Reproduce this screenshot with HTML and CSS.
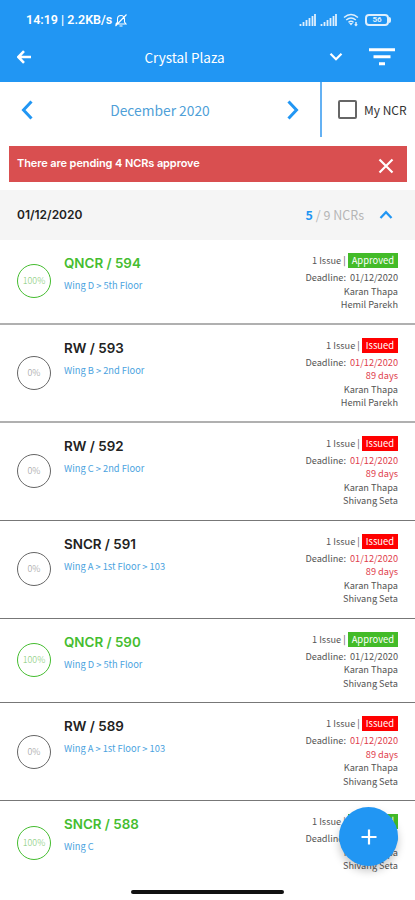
FILE: index.html
```html
<!DOCTYPE html>
<html lang="en">
<head>
<meta charset="utf-8">
<title>Crystal Plaza</title>
<link rel="stylesheet" href="styles.css">
</head>
<body>
<div class="app">
  <header class="header">
    <div class="status">
      <span class="time">14:19 | 2.2KB/s</span>
      <svg class="mute" width="14" height="15" viewBox="0 0 14 15"><path d="M2 11h10l-1.5-2V6a3.5 3.5 0 0 0-7 0v3zM5.500 13h3M1.500 13 12.500 1.500"/></svg>
      <div class="indicators">
        <svg width="17" height="12" viewBox="0 0 17 12"><path class="bars" d="M1.500 12v-2M4.500 12V8M7.500 12V6M10.500 12V4M13.500 12V2M16 12V0"/></svg>
        <svg width="17" height="12" viewBox="0 0 17 12"><path class="bars" d="M1.500 12v-2M4.500 12V8M7.500 12V6M10.500 12V4M13.500 12V2M16 12V0"/></svg>
        <svg class="wifi" width="17" height="14" viewBox="0 0 17 14"><path d="M1 4.500Q8 -1.500 15 4.500M3.200 7Q8 3 12.800 7M5.500 9.300Q8 7.300 10.500 9.300"/><path class="solid" d="m8 12.500-2-2.500h4z"/><path d="M13 9v3.500m-1.200-1.200L13 12.500l1.200-1.200"/></svg>
        <span class="battery">56</span>
      </div>
    </div>
    <div class="toolbar">
      <svg class="back" width="14" height="14" viewBox="0 0 14 14"><path d="M14 7H1.500M7 1.200 1.300 7 7 12.800"/></svg>
      <h1>Crystal Plaza</h1>
      <svg class="down" width="14" height="10" viewBox="0 0 14 10"><path d="m1.500 1.800 5.500 5.500 5.500-5.500"/></svg>
      <svg class="filter" width="26" height="18" viewBox="0 0 26 18"><path d="M0 1.700h26M4.500 8.800h17M10 15.800h6"/></svg>
    </div>
  </header>
  <div class="monthbar">
    <div class="month">
      <svg width="12" height="20" viewBox="0 0 12 20"><path d="M10.500 1.500 2.500 10l8 8.500"/></svg>
      <span>December 2020</span>
      <svg width="12" height="20" viewBox="0 0 12 20"><path d="m1.500 1.500 8 8.500-8 8.500"/></svg>
    </div>
    <label class="mine"><span class="box"></span><span>My NCR</span></label>
  </div>
  <div class="alert">
    <span>There are pending 4 NCRs approve</span>
    <svg width="16" height="16" viewBox="0 0 16 16"><path d="m1.500 1.500 13 13m0-13-13 13"/></svg>
  </div>
  <div class="group">
    <span class="date">01/12/2020</span>
    <span class="count"><b>5</b> / 9 NCRs</span>
    <svg width="14" height="10" viewBox="0 0 14 10"><path d="M1.500 8 7 2.200 12.500 8"/></svg>
  </div>
  <main>
    <article class="row approved">
      <div class="ring">100%</div>
      <div class="info"><h2>QNCR / 594</h2><p>Wing D &gt; 5th Floor</p></div>
      <div class="meta"><div class="issue">1 Issue | <span class="tag">Approved</span></div><div>Deadline: <span class="due">01/12/2020</span></div><div>Karan Thapa</div><div>Hemil Parekh</div></div>
    </article>
    <article class="row">
      <div class="ring">0%</div>
      <div class="info"><h2>RW / 593</h2><p>Wing B &gt; 2nd Floor</p></div>
      <div class="meta"><div class="issue">1 Issue | <span class="tag">Issued</span></div><div>Deadline: <span class="due">01/12/2020</span></div><div class="late">89 days</div><div>Karan Thapa</div><div>Hemil Parekh</div></div>
    </article>
    <article class="row">
      <div class="ring">0%</div>
      <div class="info"><h2>RW / 592</h2><p>Wing C &gt; 2nd Floor</p></div>
      <div class="meta"><div class="issue">1 Issue | <span class="tag">Issued</span></div><div>Deadline: <span class="due">01/12/2020</span></div><div class="late">89 days</div><div>Karan Thapa</div><div>Shivang Seta</div></div>
    </article>
    <article class="row">
      <div class="ring">0%</div>
      <div class="info"><h2>SNCR / 591</h2><p>Wing A &gt; 1st Floor &gt; 103</p></div>
      <div class="meta"><div class="issue">1 Issue | <span class="tag">Issued</span></div><div>Deadline: <span class="due">01/12/2020</span></div><div class="late">89 days</div><div>Karan Thapa</div><div>Shivang Seta</div></div>
    </article>
    <article class="row approved">
      <div class="ring">100%</div>
      <div class="info"><h2>QNCR / 590</h2><p>Wing D &gt; 5th Floor</p></div>
      <div class="meta"><div class="issue">1 Issue | <span class="tag">Approved</span></div><div>Deadline: <span class="due">01/12/2020</span></div><div>Karan Thapa</div><div>Shivang Seta</div></div>
    </article>
    <article class="row">
      <div class="ring">0%</div>
      <div class="info"><h2>RW / 589</h2><p>Wing A &gt; 1st Floor &gt; 103</p></div>
      <div class="meta"><div class="issue">1 Issue | <span class="tag">Issued</span></div><div>Deadline: <span class="due">01/12/2020</span></div><div class="late">89 days</div><div>Karan Thapa</div><div>Shivang Seta</div></div>
    </article>
    <article class="row approved">
      <div class="ring">100%</div>
      <div class="info"><h2>SNCR / 588</h2><p>Wing C</p></div>
      <div class="meta"><div class="issue">1 Issue | <span class="tag">Approved</span></div><div>Deadline: <span class="due">01/12/2020</span></div><div>Karan Thapa</div><div>Shivang Seta</div></div>
    </article>
  </main>
  <button class="fab" aria-label="Add"><svg width="16" height="16" viewBox="0 0 16 16"><path d="M8 .5v15M.5 8h15"/></svg></button>
  <div class="homebar"></div>
</div>
</body>
</html>
```
FILE: styles.css
```css
* { box-sizing: border-box; }
body { margin: 0; background: #fff; }
h1, h2, p { margin: 0; }
svg { display: block; flex: none; fill: none; stroke: currentColor; stroke-width: 2.2; }
.app {
  position: relative;
  width: 415px;
  height: 900px;
  overflow: hidden;
  background: #fff;
  color: #555;
  font-family: "Noto Sans CJK SC", sans-serif;
  white-space: nowrap;
}
.header { height: 82px; background: #2196f3; color: #fff; }
.status { display: flex; align-items: center; height: 40px; padding: 0 24px 0 26px; }
.time { font: 600 12.5px/16px Roboto, sans-serif; }
.mute { margin-left: 2px; stroke-width: 1.1; }
.indicators { display: flex; align-items: center; gap: 4px; margin-left: auto; opacity: .85; }
.bars { stroke-width: 1.8; }
.wifi { margin-left: 2px; stroke-width: 1.5; }
.solid { fill: currentColor; stroke: none; }
.battery {
  position: relative;
  width: 24px;
  height: 12px;
  margin: 0 2px 0 1px;
  border: 2px solid #fff;
  border-radius: 4px;
  font: 700 8px/8px Roboto, sans-serif;
  text-align: center;
}
.battery::after { content: ""; position: absolute; right: -4px; top: 1px; width: 2px; height: 6px; border-radius: 0 2px 2px 0; background: #fff; }
.toolbar { display: flex; align-items: center; height: 34px; padding: 0 21px 0 17px; }
.back { stroke-width: 2.6; }
h1 { flex: 1; padding-left: 9px; text-align: center; font-size: 13.5px; font-weight: 400; line-height: 20px; }
.down { margin-right: 26px; }
.filter { margin-right: -1px; stroke-width: 3; }
.monthbar { display: flex; height: 55px; }
.month { display: flex; align-items: center; justify-content: space-between; width: 322px; padding: 0 21px 0 21px; border-right: 2px solid #64b1f3; color: #4f9fd8; font-size: 13.8px; line-height: 22px; }
.month svg { color: #2196f3; stroke-width: 3; }
.mine { display: flex; align-items: center; gap: 7px; padding-left: 16px; color: #333; font-size: 12px; }
.box { width: 19px; height: 19px; border: 2px solid #666; border-radius: 2px; }
.alert { display: flex; align-items: center; justify-content: space-between; height: 36px; margin: 9px 8px 0 9px; padding: 0 13px 0 8px; background: #d94f50; color: #fff; }
.alert span { padding-bottom: 2px; font: 600 11px/16px Inter, sans-serif; letter-spacing: -.1px; }
.alert svg { margin-top: 4px; }
.group { display: flex; align-items: center; height: 50px; margin-top: 8px; padding: 0 22px 0 17px; background: #f5f5f5; }
.date { flex: 1; color: #222; font: 600 12px/16px Inter, sans-serif; }
.count { margin-right: 15px; color: #b5b5b5; font-size: 12.5px; line-height: 18px; }
.count b { color: #2196f3; }
.group svg { color: #2196f3; }
.row { --tone: #666; display: flex; align-items: center; height: 98px; padding: 0 17px; border-bottom: 1px solid #777; }
.row:nth-child(-n+2) { border-bottom: 2px solid #b0b0b0; }
.approved { --tone: #45bd30; height: 84.5px; }
.row:last-child { border-bottom: 0; }
.ring { width: 34px; height: 34px; border: 1.5px solid var(--tone); border-radius: 50%; color: #999; font-size: 9px; font-weight: 300; line-height: 32px; text-align: center; }
.approved .ring { color: #7fc972; }
.info { flex: 1; align-self: flex-start; padding: 14px 0 0 13px; }
h2 { color: #222; font: 600 13.4px/18px Inter, sans-serif; }
.approved h2 { color: var(--tone); }
.info p { margin-top: 5px; color: #4ba3e0; font-size: 9.3px; line-height: 16px; }
.meta { align-self: flex-start; padding-top: 13px; text-align: right; font-size: 9.2px; line-height: 13.5px; }
.issue { display: flex; justify-content: flex-end; gap: 2px; margin-bottom: 3px; line-height: 15px; }
.tag { padding: 0 4px; background: #f00; color: #fff; font-size: 9.4px; }
.approved .tag { background: #43bb28; }
.due { margin-left: 2px; color: #e0404c; }
.approved .due { color: inherit; }
.late { color: #e0404c; }
.fab { position: absolute; left: 339px; top: 807px; display: grid; place-items: center; width: 59px; height: 59px; padding: 0; border: 0; border-radius: 50%; background: #2196f3; color: #fff; box-shadow: 0 5px 8px rgba(0, 0, 0, .22); }
.homebar { position: absolute; left: 131px; top: 890px; width: 153px; height: 4px; border-radius: 2px; background: #111; }
```
